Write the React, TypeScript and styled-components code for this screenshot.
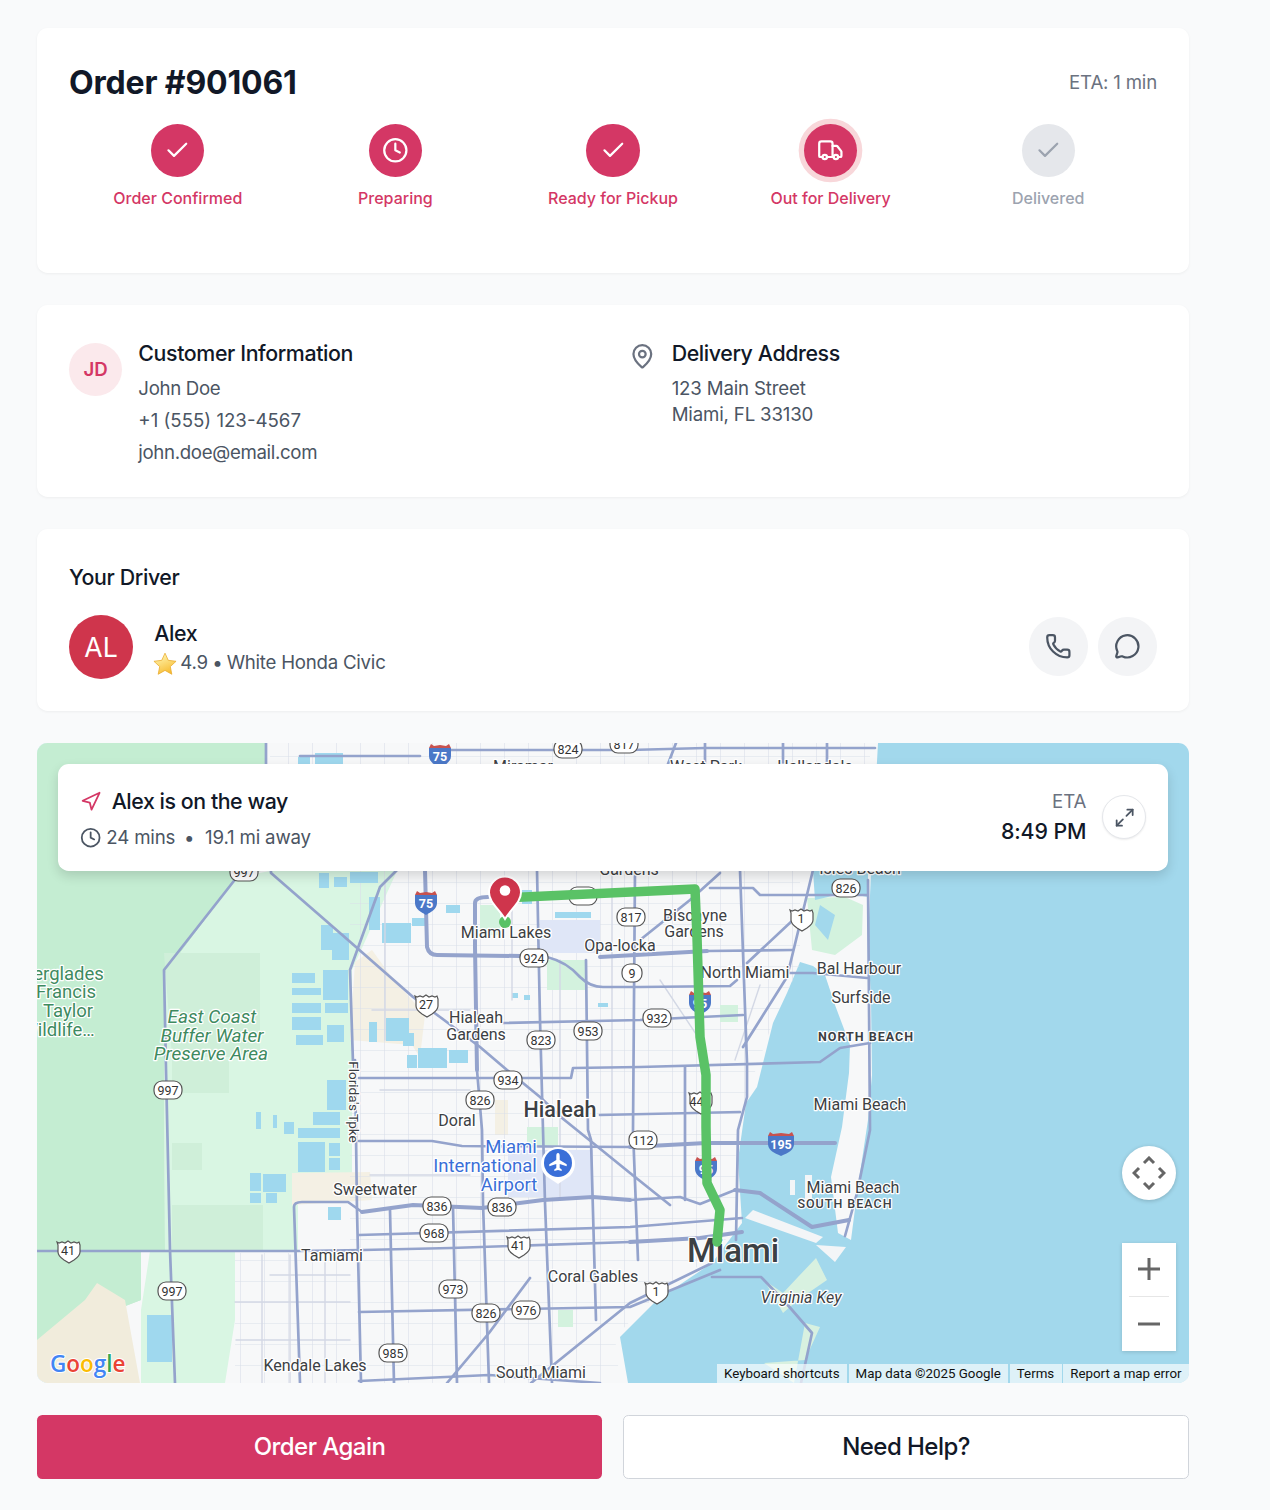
import React from "react";
import styled, {createGlobalStyle} from "styled-components";
import {Check, Clock, MapPin, Maximize2, MessageCircle, Navigation, Phone, Truck} from "lucide-react";

const PRIMARY = "#d43765";

const GlobalStyle = createGlobalStyle`
  body {
    margin: 0;
    background-color: #f9fafb;
    color: #111827;
    font-family: Inter, "Noto Sans", sans-serif;
  }
`;

const Page = styled.div`
  display: flex;
  flex-direction: column;
  gap: 32px;
  margin-left: 37px;
  padding: 28px 0 31px;
  width: 1152px;
`;

const Card = styled.section`
  background-color: white;
  border-radius: 10.67px;
  box-shadow: 0 1px 3px rgba(0, 0, 0, 0.05);
  padding: 32px;
`;

const OrderHeader = styled.div`
  align-items: center;
  display: flex;
  justify-content: space-between;
  margin-bottom: 21.33px;
`;

const OrderTitle = styled.h1`
  font-size: 32px;
  font-weight: 700;
  letter-spacing: -0.16px;
  line-height: 38.67px;
  margin: 0;
  padding-top: 4px;
`;

const OrderEta = styled.div`
  color: #6b7280;
  font-size: 18.67px;
  letter-spacing: -0.2px;
  line-height: 22.67px;
  padding-top: 4px;
`;

const Steps = styled.div`
  display: grid;
  grid-template-columns: repeat(5, 1fr);
  padding-bottom: 32px;
`;

const Step = styled.div`
  align-items: center;
  display: flex;
  flex-direction: column;
`;

const StepCircle = styled.div<{$done: boolean; $active?: boolean}>`
  align-items: center;
  background-color: ${(p) => (p.$done ? PRIMARY : "#e5e7eb")};
  border-radius: 50%;
  box-shadow: ${(p) => (p.$active ? "0 0 0 5.33px #f8d7da" : "none")};
  color: ${(p) => (p.$done ? "white" : "#9ca3af")};
  display: flex;
  height: 53.33px;
  justify-content: center;
  width: 53.33px;
`;

const StepLabel = styled.div<{$done: boolean}>`
  color: ${(p) => (p.$done ? PRIMARY : "#9ca3af")};
  font-size: 16px;
  font-weight: 500;
  line-height: 21.33px;
  margin-top: 10.67px;
`;

const InfoGrid = styled.div`
  display: grid;
  gap: 32px;
  grid-template-columns: 1fr 1fr;
`;

const InfoBlock = styled.div`
  align-items: flex-start;
  display: flex;
  gap: 16px;
`;

const Initials = styled.div`
  align-items: center;
  background-color: #fbe9ec;
  border-radius: 50%;
  color: ${PRIMARY};
  display: flex;
  flex-shrink: 0;
  font-size: 18.67px;
  font-weight: 600;
  height: 53.33px;
  justify-content: center;
  margin-top: 5.33px;
  width: 53.33px;
`;

const PinIcon = styled(MapPin)`
  color: #6b7280;
  flex-shrink: 0;
  margin-top: 5.33px;
`;

const SectionTitle = styled.h2<{$spaced?: boolean}>`
  font-size: 21.33px;
  font-weight: 500;
  letter-spacing: -0.38px;
  line-height: 32px;
  margin: 0 0 ${(p) => (p.$spaced ? "21.33px" : "5.33px")};
`;

const InfoLine = styled.div<{$tight?: boolean; $spacing?: number}>`
  color: #4b5563;
  font-size: 18.67px;
  letter-spacing: ${(p) => (p.$spacing === undefined ? -0.34 : p.$spacing)}px;
  line-height: 24.67px;
  margin-bottom: ${(p) => (p.$tight ? "0" : "5.33px")};
  padding-top: 2px;
  &:last-child {
    margin-bottom: 0;
  }
`;

const DriverRow = styled.div`
  align-items: center;
  display: flex;
  justify-content: space-between;
`;

const DriverInfo = styled.div`
  align-items: center;
  display: flex;
  gap: 21.33px;
`;

const DriverAvatar = styled.div`
  align-items: center;
  background-color: #cf354c;
  border-radius: 50%;
  color: white;
  display: flex;
  font-size: 26.67px;
  height: 64px;
  justify-content: center;
  width: 64px;
`;

const DriverName = styled.div`
  font-size: 21.33px;
  font-weight: 500;
  letter-spacing: -0.4px;
  line-height: 32px;
`;

const DriverMeta = styled.div`
  align-items: center;
  color: #4b5563;
  display: flex;
  font-size: 18.67px;
  letter-spacing: -0.24px;
  line-height: 24.67px;
  padding-top: 2px;
`;

const Dot = styled.span`
  margin: 0 4px 0 4.5px;
`;

const StarBadge = styled.svg`
  flex-shrink: 0;
  margin: 0 2px 0 -2px;
`;

const DriverActions = styled.div`
  display: flex;
  gap: 10.67px;
`;

const RoundButton = styled.button`
  align-items: center;
  background-color: #f3f4f6;
  border: none;
  border-radius: 50%;
  color: #4b5563;
  display: flex;
  height: 58.67px;
  justify-content: center;
  padding: 0;
  width: 58.67px;
`;

const MapFrame = styled.div`
  border-radius: 10.67px;
  height: 640px;
  overflow: hidden;
  position: relative;
`;

const MapCanvas = styled.svg`
  display: block;
  height: 640px;
  width: 1152px;
`;

const RouteCard = styled.div`
  align-items: center;
  background-color: white;
  border-radius: 10.67px;
  box-shadow: 0 5px 12px rgba(0, 0, 0, 0.14);
  display: flex;
  justify-content: space-between;
  left: 21.33px;
  padding: 21.33px;
  position: absolute;
  right: 21.33px;
  top: 21.33px;
`;

const RouteTitle = styled.div`
  align-items: center;
  display: flex;
  font-size: 21.33px;
  font-weight: 500;
  gap: 10.67px;
  letter-spacing: -0.44px;
  line-height: 32px;
  margin-bottom: 5.33px;
`;

const RouteMeta = styled.div`
  align-items: center;
  color: #4b5563;
  display: flex;
  font-size: 18.67px;
  gap: 5.33px;
  letter-spacing: -0.17px;
  line-height: 23.67px;
  padding-top: 3px;
`;

const MetaDot = styled.span`
  margin: 0 5.33px 0 3.5px;
`;

const RouteEnd = styled.div`
  align-items: center;
  display: flex;
  gap: 16px;
`;

const EtaBlock = styled.div`
  text-align: right;
`;

const EtaLabel = styled.div`
  color: #6b7280;
  font-size: 18.67px;
  letter-spacing: -0.1px;
  line-height: 24.67px;
  padding-top: 2px;
`;

const EtaTime = styled.div`
  font-size: 21.33px;
  font-weight: 500;
  letter-spacing: -0.1px;
  line-height: 32px;
`;

const ExpandButton = styled.button`
  align-items: center;
  background-color: white;
  border: 1px solid #e5e7eb;
  border-radius: 50%;
  box-shadow: 0 1px 2px rgba(0, 0, 0, 0.08);
  color: #4b5563;
  display: flex;
  height: 44px;
  justify-content: center;
  padding: 0;
  width: 44px;
`;

const CameraControl = styled.div`
  align-items: center;
  background-color: white;
  border-radius: 50%;
  bottom: 183px;
  box-shadow: 0 1px 4px rgba(0, 0, 0, 0.2);
  display: flex;
  height: 54px;
  justify-content: center;
  position: absolute;
  right: 13px;
  width: 54px;
`;

const ZoomControl = styled.div`
  background-color: white;
  bottom: 32px;
  box-shadow: 0 1px 4px rgba(0, 0, 0, 0.15);
  display: flex;
  flex-direction: column;
  height: 108px;
  position: absolute;
  right: 13px;
  width: 54px;
`;

const ZoomButton = styled.div`
  align-items: center;
  display: flex;
  flex: 1;
  justify-content: center;
`;

const ZoomDivider = styled.div`
  background-color: #e6e6e6;
  height: 1px;
  margin: 0 7px;
`;

const Attribution = styled.div`
  bottom: 0;
  display: flex;
  font-family: Roboto, sans-serif;
  font-size: 13.33px;
  gap: 1.5px;
  height: 19px;
  line-height: 19px;
  position: absolute;
  right: 0;
`;

const AttributionItem = styled.div`
  background-color: rgba(255, 255, 255, 0.65);
  color: #111;
  padding: 0 7.5px 0 7px;
`;

const Actions = styled.div`
  display: grid;
  gap: 21px;
  grid-template-columns: 565px 1fr;
`;

const ActionButton = styled.button<{$primary?: boolean}>`
  background-color: ${(p) => (p.$primary ? PRIMARY : "white")};
  border: ${(p) => (p.$primary ? "none" : "1.33px solid #d1d5db")};
  border-radius: 5.33px;
  color: ${(p) => (p.$primary ? "white" : "#111827")};
  font-family: Inter, sans-serif;
  font-size: 24px;
  font-weight: 500;
  height: 64px;
  letter-spacing: -0.55px;
`;

// map drawing parts
const Road = styled.path<{$kind: "wide" | "major" | "minor"}>`
  fill: none;
  stroke: ${(p) => (p.$kind === "minor" ? "#d3d8e5" : "#94a3cc")};
  stroke-linecap: round;
  stroke-linejoin: round;
  stroke-width: ${(p) => (p.$kind === "wide" ? 4 : p.$kind === "major" ? 2.7 : 1.4)};
`;

const PlaceLabel = styled.text<{$tone?: "dark" | "green" | "blue"; $size?: number; $weight?: number; $italic?: boolean; $spacing?: number}>`
  fill: ${(p) => (p.$tone === "green" ? "#3e8a60" : p.$tone === "blue" ? "#3a6fd8" : "#3c4043")};
  font-family: Roboto, sans-serif;
  font-size: ${(p) => p.$size || 16}px;
  font-style: ${(p) => (p.$italic ? "italic" : "normal")};
  font-weight: ${(p) => p.$weight || 400};
  letter-spacing: ${(p) => p.$spacing || 0}px;
  paint-order: stroke;
  stroke: white;
  stroke-linejoin: round;
  stroke-width: 2.5px;
  text-anchor: middle;
`;

const ShieldText = styled.text<{$fill?: string; $bold?: boolean}>`
  fill: ${(p) => p.$fill || "#333"};
  font-family: Roboto, sans-serif;
  font-size: 12.5px;
  font-weight: ${(p) => (p.$bold ? 700 : 400)};
  text-anchor: middle;
`;

const GoogleMark = styled.text`
  font-family: "Open Sans", sans-serif;
  font-size: 22.5px;
  font-weight: 600;
  paint-order: stroke;
  stroke: white;
  stroke-width: 2px;
`;

const steps = [
  {label: "Order Confirmed", icon: <Check size={26.67} />, done: true},
  {label: "Preparing", icon: <Clock size={26.67} />, done: true},
  {label: "Ready for Pickup", icon: <Check size={26.67} />, done: true},
  {label: "Out for Delivery", icon: <Truck size={26.67} />, done: true, active: true},
  {label: "Delivered", icon: <Check size={26.67} />, done: false},
];

const wideRoads = [
  "M362 1212L413 1205L482 1208L543 1200L593 1197L630 1200",
  "M425 870L427 947Q429 955 437 955L520 956",
  "M475 903Q475 897 488 897M475 903L475 947L477 1070",
  "M706 1143L835 1143",
  "M630 1147L706 1143",
  "M735 1190L760 1193L812 1227L849 1220",
  "M600 957L707 951",
  "M630 1242L700 1238L742 1232",
];

const majorRoads = [
  "M266 743V764L271 873L340 933L413 997L440 1017L480 1047L507 1070L540 1097L562 1118L593 1143L630 1173L670 1205",
  "M237 877L164 970L166 1070L170 1250L175 1383",
  "M37 1251H298L363 1250L451 1248L630 1242",
  "M300 1383L294 1207Q294 1202 302 1202H348L362 1212",
  "M630 1200L680 1197L700 1204L735 1190",
  "M355 1060L357 1210L361 1383",
  "M359 1235L630 1227L742 1218",
  "M390 1210L394 1383",
  "M453 1207L457 1383",
  "M477 1070L482 1130L483 1203L489 1383",
  "M537 870L540 1020L543 1130L545 1203L552 1383",
  "M586 960L588 1130L591 1140L596 1320",
  "M635 870L633 1130L638 1260",
  "M685 1067V1200",
  "M359 1078L493 1078L571 1078L573 1068L640 1067L820 1062L840 1048L870 1043",
  "M359 1141H432L462 1146L630 1147",
  "M359 1312L630 1307L720 1270",
  "M359 1381L489 1375L600 1383",
  "M447 1383L489 1333L530 1278",
  "M531 1383L630 1303L712 1263",
  "M520 956L547 957Q567 962 580 977Q590 987 603 987H640L730 986L737 980",
  "M397 870L380 887L350 970L353 1063",
  "M503 1023L640 1020L743 1015",
  "M707 951L793 950",
  "M740 870L747 1063V1097L738 1130L736 1240",
  "M710 888H753L760 895H867",
  "M600 1115L740 1112",
  "M813 870L787 977L743 1047",
  "M747 963L793 920",
  "M640 940L690 900L720 873",
  "M788 973H813L867 978",
  "M868 880L870 1130L857 1193L845 1236",
  "M712 1277H761L786 1303L812 1333L801 1383",
  "M451 750H630L705 748H875",
  "M668 764L676 743",
  "M705 743V764M783 743V764M827 743V764",
  "M300 756H420",
];

const minorRoads = [
  "M270 1275H350M235 1302H350M236 1340H350",
  "M262 1255V1383M290 1255V1383M325 1255V1383",
  "M385 880V1040M512 880V1000M560 960V1200M612 870V1200",
  "M372 1010H470M380 1090H470M370 1175H470",
  "M660 980L700 1040",
  "M760 985L735 1060",
];

const waterPatches = [
  [315, 753, 28, 11], [298, 757, 12, 7], [319, 873, 10, 15], [334, 877, 13, 10], [350, 872, 28, 11],
  [321, 925, 12, 25], [332, 933, 17, 27], [369, 897, 11, 33], [382, 923, 29, 20], [292, 973, 23, 10],
  [323, 970, 25, 30], [292, 988, 29, 7], [292, 1003, 29, 10], [325, 1003, 23, 10], [292, 1017, 29, 13],
  [327, 1025, 17, 17], [296, 1035, 27, 10], [369, 1022, 8, 20], [386, 1018, 23, 23], [403, 1033, 11, 13],
  [418, 1048, 29, 20], [407, 1055, 10, 13], [449, 1050, 19, 13], [327, 1080, 19, 30], [313, 1112, 27, 13],
  [298, 1128, 42, 10], [298, 1142, 27, 30], [329, 1143, 11, 13], [329, 1158, 11, 12], [256, 1112, 5, 17],
  [273, 1115, 4, 13], [284, 1122, 10, 12], [250, 1173, 11, 18], [263, 1174, 23, 18], [250, 1193, 11, 10],
  [266, 1193, 11, 10], [147, 1315, 25, 47], [328, 1207, 13, 13], [446, 905, 14, 8], [412, 918, 14, 8],
  [522, 890, 10, 14], [555, 912, 36, 6], [512, 993, 6, 5], [524, 995, 6, 5], [598, 1003, 10, 4],
];

const stateShields: [number, number, string][] = [
  [568, 749, "824"], [624, 744, "817"], [244, 872, "997"], [631, 917, "817"], [534, 958, "924"],
  [632, 973, "9"], [588, 1031, "953"], [657, 1018, "932"], [541, 1040, "823"], [508, 1080, "934"],
  [480, 1100, "826"], [846, 888, "826"], [168, 1090, "997"], [643, 1140, "112"], [437, 1206, "836"],
  [502, 1207, "836"], [434, 1233, "968"], [453, 1289, "973"], [486, 1313, "826"], [526, 1310, "976"],
  [393, 1353, "985"], [172, 1291, "997"], [583, 896, ""],
];

const usShields: [number, number, string][] = [
  [801, 919, "1"], [426, 1005, "27"], [68, 1251, "41"], [518, 1246, "41"], [656, 1292, "1"], [700, 1102, "441"],
];

const interstates: [number, number, string][] = [
  [440, 755, "75"], [426, 902, "75"], [781, 1143, "195"], [700, 1002, "95"], [706, 1168, "95"],
];

type Label = {x: number; y: number; text: string; tone?: "dark" | "green" | "blue"; size?: number; weight?: number; italic?: boolean; spacing?: number};

const labels: Label[] = [
  {x: 523, y: 772, text: "Miramar"},
  {x: 706, y: 772, text: "West Park"},
  {x: 815, y: 772, text: "Hallandale"},
  {x: 629, y: 875, text: "Gardens"},
  {x: 860, y: 874, text: "Isles Beach"},
  {x: 506, y: 938, text: "Miami Lakes"},
  {x: 620, y: 951, text: "Opa-locka"},
  {x: 695, y: 921, text: "Biscayne"},
  {x: 694, y: 937, text: "Gardens"},
  {x: 745, y: 978, text: "North Miami"},
  {x: 859, y: 974, text: "Bal Harbour"},
  {x: 861, y: 1003, text: "Surfside"},
  {x: 866, y: 1041, text: "NORTH BEACH", size: 12.5, weight: 700, spacing: 1},
  {x: 860, y: 1110, text: "Miami Beach"},
  {x: 476, y: 1023, text: "Hialeah"},
  {x: 476, y: 1040, text: "Gardens"},
  {x: 560, y: 1117, text: "Hialeah", size: 21.5, weight: 500},
  {x: 457, y: 1126, text: "Doral"},
  {x: 511, y: 1153, text: "Miami", tone: "blue", size: 18.5},
  {x: 485, y: 1172, text: "International", tone: "blue", size: 18.5},
  {x: 509, y: 1191, text: "Airport", tone: "blue", size: 18.5},
  {x: 375, y: 1195, text: "Sweetwater"},
  {x: 332, y: 1261, text: "Tamiami"},
  {x: 593, y: 1282, text: "Coral Gables"},
  {x: 733, y: 1262, text: "Miami", size: 33, weight: 500},
  {x: 801, y: 1303, text: "Virginia Key", italic: true},
  {x: 853, y: 1193, text: "Miami Beach"},
  {x: 845, y: 1208, text: "SOUTH BEACH", size: 12.5, weight: 500, spacing: 1},
  {x: 315, y: 1371, text: "Kendale Lakes"},
  {x: 541, y: 1378, text: "South Miami"},
  {x: 59, y: 980, text: "Everglades", tone: "green", size: 18.5},
  {x: 66, y: 998, text: "Francis", tone: "green", size: 18.5},
  {x: 68, y: 1017, text: "Taylor", tone: "green", size: 18.5},
  {x: 58, y: 1036, text: "Wildlife…", tone: "green", size: 18.5},
  {x: 212, y: 1023, text: "East Coast", tone: "green", size: 19, italic: true},
  {x: 212, y: 1042, text: "Buffer Water", tone: "green", size: 19, italic: true},
  {x: 211, y: 1060, text: "Preserve Area", tone: "green", size: 19, italic: true},
];

const StateShield: React.FC<{x: number; y: number; text: string}> = ({x, y, text}) => {
  const w = text.length === 1 ? 20 : 28;
  return (
    <g>
      <rect x={x - w / 2} y={y - 9} width={w} height={18} rx={8} fill="white" stroke="#555" strokeWidth={1.2} />
      <ShieldText x={x} y={y + 4.5}>{text}</ShieldText>
    </g>
  );
};

const UsShield: React.FC<{x: number; y: number; text: string}> = ({x, y, text}) => (
  <g transform={`translate(${x} ${y})`}>
    <path
      d="M-11 -9l2 1 3-1 3 1 3-2 3 2 3-1 3 1 2-1 1 3v7c0 4-3 6-6 8l-5 3-5-3c-3-2-6-4-6-8v-7z"
      fill="white"
      stroke="#555"
      strokeWidth={1.2}
    />
    <ShieldText x={0} y={4}>{text}</ShieldText>
  </g>
);

const Interstate: React.FC<{x: number; y: number; text: string}> = ({x, y, text}) => {
  const half = text.length === 3 ? 13 : 11;
  return (
    <g transform={`translate(${x} ${y})`}>
      <path d={`M${-half} -7c${half} 0 ${half} 0 ${half * 2} 0v8c0 6-6 9-${half} 12c-${half - 6}-3-${half}-6-${half}-12z`} fill="#4b78c8" />
      <path d={`M${-half} -7l2-4 3 2 ${half - 5}-1 ${half - 5} 1 3-2 2 4z`} fill="#c8524f" />
      <ShieldText x={0} y={6} $fill="white" $bold>{text}</ShieldText>
    </g>
  );
};

const ServiceMap: React.FC = () => (
  <MapCanvas viewBox="37 743 1152 640">
    <defs>
      <pattern id="streets" width="24" height="21" patternUnits="userSpaceOnUse">
        <path d="M0 0H24M0 0V21" stroke="#dadfe9" strokeWidth="1.2" fill="none" />
      </pattern>
    </defs>
    <rect x="37" y="743" width="1152" height="640" fill="#a2d8ec" />
    <path
      d="M37 743H878L871 873L868 940L871 1000L872 1075L868 1120L857 1193L851 1240L838 1233L831 1177L842 1127L849 1073L850 1045L835 1005L825 975L813 966L800 962L787 993L773 1023L757 1087L746 1103L738 1160L742 1223L712 1263L657 1300L620 1337L628 1383H37Z"
      fill="#f7f8f9"
    />
    <path d="M37 743H265V870L237 877L164 975L165 1251H141V1300L37 1340Z" fill="#c4edd2" />
    <path
      d="M164 975L237 877L270 871H397L352 970V1185L298 1195V1251H235V1320L225 1383H141V1310L150 1251H165Z"
      fill="#d9f6e3"
    />
    <path d="M37 1251H141V1300L37 1340Z" fill="#c4edd2" />
    <path d="M164 953H260V1057H172ZM172 1060H229V1093H172ZM172 1205H263V1250H172ZM172 1143H202V1170H172Z" fill="#cfefd9" />
    <path d="M37 1383V1340L85 1300L97 1283L125 1300L140 1383Z" fill="#f1ecdc" />
    <path d="M372 950L355 962L350 1040L412 1045L420 1057L425 1015L390 975ZM292 1173L370 1172L372 1200L292 1205ZM495 1100H508V1135H495Z" fill="#f4f0e4" />
    <path
      d="M350 870H800V965L770 1030L745 1100L735 1160L738 1225L710 1258L655 1296L615 1337L620 1383H235V1253H350ZM270 743H870V764H270Z"
      fill="url(#streets)"
    />
    <path d="M508 1150H593V1197H508ZM540 920H600V953H540Z" fill="#dfe6f7" />
    <path d="M807 898L845 897L863 905L862 935L835 955L812 950ZM547 960H587V990H547ZM480 905H500V935H480ZM527 1127H558V1147H527ZM558 1310H573V1327H558ZM720 1005H738V1022H720Z" fill="#d3f2de" />
    <path d="M813 871H868V897L845 893L815 900ZM820 905L835 915L828 940L815 925Z" fill="#a2d8ec" />
    <path d="M764 1280L783 1293L798 1277L816 1258L827 1280L798 1300L783 1313ZM805 1323L820 1327L805 1360L764 1363L794 1383Z" fill="#d8f1e0" />
    <path d="M753 1210L823 1237L816 1243L745 1218ZM816 1245L846 1247L835 1262ZM805 1175H812V1200H805ZM790 1180H795V1195H790Z" fill="#f3f5f7" />
    {waterPatches.map(([x, y, w, h]) => (
      <rect key={`${x}-${y}`} x={x} y={y} width={w} height={h} fill="#9fd8ee" />
    ))}
    {minorRoads.map((d) => (
      <Road key={d} d={d} $kind="minor" />
    ))}
    {majorRoads.map((d) => (
      <Road key={d} d={d} $kind="major" />
    ))}
    {wideRoads.map((d) => (
      <Road key={d} d={d} $kind="wide" />
    ))}
    {labels.map((l) => (
      <PlaceLabel
        key={`${l.text}-${l.y}`}
        x={l.x}
        y={l.y}
        $tone={l.tone}
        $size={l.size}
        $weight={l.weight}
        $italic={l.italic}
        $spacing={l.spacing}
      >
        {l.text}
      </PlaceLabel>
    ))}
    <PlaceLabel transform="translate(349 1102) rotate(90)" x={0} y={0} $size={13.5}>
      Florida's Tpke
    </PlaceLabel>
    {stateShields.map(([x, y, t]) => (
      <StateShield key={`s${x}-${y}`} x={x} y={y} text={t} />
    ))}
    {usShields.map(([x, y, t]) => (
      <UsShield key={`u${x}-${y}`} x={x} y={y} text={t} />
    ))}
    {interstates.map(([x, y, t]) => (
      <Interstate key={`i${x}-${y}`} x={x} y={y} text={t} />
    ))}
    <path d="M558 1184L546 1176A17 17 0 1 1 570 1176Z" fill="white" />
    <circle cx="558" cy="1163" r="14" fill="#3a6fd8" />
    <path
      d="M558 1153c1.2 0 1.7 1.3 1.7 3v4l7 4.2v2l-7-2.2v4l2 1.6v1.5l-3.7-1-3.7 1v-1.5l2-1.6v-4l-7 2.2v-2l7-4.2v-4c0-1.7.5-3 1.7-3z"
      fill="white"
    />
    <circle cx="505" cy="922" r="6" fill="#5ac266" />
    <path
      d="M505 898L695 889L697 937L700 1037L706 1075L706 1127L707 1183L720 1210L717 1242"
      fill="none"
      stroke="#5ac266"
      strokeWidth="9.5"
      strokeLinecap="round"
      strokeLinejoin="round"
    />
    <path
      d="M505 919C499 909 489 902 489 892.5A16 16 0 0 1 521 892.5C521 902 511 909 505 919Z"
      fill="#cf354c"
      stroke="white"
      strokeWidth="2"
    />
    <circle cx="505" cy="890.5" r="5.3" fill="white" />
    <GoogleMark x="50" y="1372">
      <tspan fill="#4285f4">G</tspan>
      <tspan fill="#ea4335">o</tspan>
      <tspan fill="#fbbc05">o</tspan>
      <tspan fill="#4285f4">g</tspan>
      <tspan fill="#34a853">l</tspan>
      <tspan fill="#ea4335">e</tspan>
    </GoogleMark>
  </MapCanvas>
);

const Star: React.FC = () => (
  <StarBadge width="26" height="26" viewBox="0 0 24 24">
    <defs>
      <linearGradient id="starFill" x1="0.3" y1="0.1" x2="0.7" y2="1">
        <stop offset="0" stopColor="#fff2a8" />
        <stop offset="1" stopColor="#f6b92b" />
      </linearGradient>
    </defs>
    <path
      d="M12 2l3 6.6 7.2.9-5.3 4.9 1.4 7.1L12 17.9l-6.3 3.6 1.4-7.1L1.8 9.5 9 8.6z"
      fill="url(#starFill)"
      stroke="#e8a92c"
      strokeWidth="0.7"
      strokeLinejoin="round"
    />
  </StarBadge>
);

const App: React.FC = () => {
  return (
    <Page>
      <GlobalStyle />
      <Card>
        <OrderHeader>
          <OrderTitle>Order #901061</OrderTitle>
          <OrderEta>ETA: 1 min</OrderEta>
        </OrderHeader>
        <Steps>
          {steps.map((s) => (
            <Step key={s.label}>
              <StepCircle $done={s.done} $active={s.active}>{s.icon}</StepCircle>
              <StepLabel $done={s.done}>{s.label}</StepLabel>
            </Step>
          ))}
        </Steps>
      </Card>

      <Card>
        <InfoGrid>
          <InfoBlock>
            <Initials>JD</Initials>
            <div>
              <SectionTitle>Customer Information</SectionTitle>
              <InfoLine>John Doe</InfoLine>
              <InfoLine $spacing={0}>+1 (555) 123-4567</InfoLine>
              <InfoLine>john.doe@email.com</InfoLine>
            </div>
          </InfoBlock>
          <InfoBlock>
            <PinIcon size={26.67} />
            <div>
              <SectionTitle>Delivery Address</SectionTitle>
              <InfoLine $tight $spacing={-0.17}>123 Main Street</InfoLine>
              <InfoLine $tight $spacing={-0.17}>Miami, FL 33130</InfoLine>
            </div>
          </InfoBlock>
        </InfoGrid>
      </Card>

      <Card>
        <SectionTitle $spaced>Your Driver</SectionTitle>
        <DriverRow>
          <DriverInfo>
            <DriverAvatar>AL</DriverAvatar>
            <div>
              <DriverName>Alex</DriverName>
              <DriverMeta>
                <Star />
                4.9<Dot>•</Dot>White Honda Civic
              </DriverMeta>
            </div>
          </DriverInfo>
          <DriverActions>
            <RoundButton><Phone size={26.67} /></RoundButton>
            <RoundButton><MessageCircle size={26.67} /></RoundButton>
          </DriverActions>
        </DriverRow>
      </Card>

      <MapFrame>
        <ServiceMap />
        <RouteCard>
          <div>
            <RouteTitle>
              <Navigation size={21.33} color={PRIMARY} />
              Alex is on the way
            </RouteTitle>
            <RouteMeta>
              <Clock size={21.33} />
              24 mins<MetaDot>•</MetaDot>19.1 mi away
            </RouteMeta>
          </div>
          <RouteEnd>
            <EtaBlock>
              <EtaLabel>ETA</EtaLabel>
              <EtaTime>8:49 PM</EtaTime>
            </EtaBlock>
            <ExpandButton><Maximize2 size={21.33} /></ExpandButton>
          </RouteEnd>
        </RouteCard>
        <CameraControl>
          <svg width="34" height="34" viewBox="0 0 34 34" fill="none" stroke="#666" strokeWidth="3">
            <path d="M12 7l5-5 5 5M12 27l5 5 5-5M7 12l-5 5 5 5M27 12l5 5-5 5" />
          </svg>
        </CameraControl>
        <ZoomControl>
          <ZoomButton>
            <svg width="24" height="24" viewBox="0 0 24 24" fill="none" stroke="#666" strokeWidth="3">
              <path d="M1 12H23M12 1V23" />
            </svg>
          </ZoomButton>
          <ZoomDivider />
          <ZoomButton>
            <svg width="24" height="24" viewBox="0 0 24 24" fill="none" stroke="#666" strokeWidth="3">
              <path d="M1 12H23" />
            </svg>
          </ZoomButton>
        </ZoomControl>
        <Attribution>
          <AttributionItem>Keyboard shortcuts</AttributionItem>
          <AttributionItem>Map data ©2025 Google</AttributionItem>
          <AttributionItem>Terms</AttributionItem>
          <AttributionItem>Report a map error</AttributionItem>
        </Attribution>
      </MapFrame>

      <Actions>
        <ActionButton $primary>Order Again</ActionButton>
        <ActionButton>Need Help?</ActionButton>
      </Actions>
    </Page>
  );
};

export default App;
